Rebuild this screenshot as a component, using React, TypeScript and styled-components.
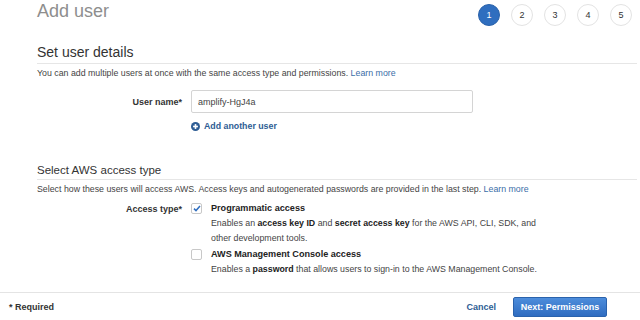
import * as React from "react";
import styled, { createGlobalStyle } from "styled-components";

const GlobalStyle = createGlobalStyle`
  html, body {
    margin: 0;
    padding: 0;
    background: #ffffff;
  }
  body {
    font-family: "Liberation Sans", Arial, Helvetica, sans-serif;
    color: #333333;
  }
`;

const Page = styled.div`
  display: flex;
  flex-direction: column;
  width: 640px;
  height: 320px;
  overflow: hidden;
`;

const Content = styled.div`
  flex: 1;
  padding: 0 3px 0 37px;
`;

const Header = styled.div`
  display: flex;
  justify-content: space-between;
  align-items: flex-start;
  height: 26px;
  padding-right: 5px;
`;

const Title = styled.h1`
  margin: 0;
  padding-top: 1px;
  font-size: 18px;
  line-height: 20px;
  font-weight: normal;
  color: #8e8e8e;
`;

const Steps = styled.div`
  display: flex;
  gap: 11px;
  margin-top: 4px;
`;

const Step = styled.div<{ active?: boolean }>`
  box-sizing: border-box;
  width: 22px;
  height: 22px;
  border-radius: 50%;
  display: flex;
  align-items: center;
  justify-content: center;
  font-size: 9px;
  background: ${(p) => (p.active ? "#2f6ebf" : "#ffffff")};
  border: 1px solid ${(p) => (p.active ? "#2a62aa" : "#e3e3e3")};
  color: ${(p) => (p.active ? "#ffffff" : "#333333")};
`;

const SectionTitle = styled.h2<{ top: number; size: number; gap: number }>`
  margin: ${(p) => p.top}px 0 0;
  padding-bottom: ${(p) => p.gap}px;
  font-size: ${(p) => p.size}px;
  line-height: 16px;
  font-weight: normal;
  color: #333333;
  border-bottom: 1px solid #e6e6e6;
`;

const Description = styled.p`
  margin: 3px 0 0;
  font-size: 8.8px;
  line-height: 12px;
  color: #444444;
`;

const Link = styled.a`
  color: #3a6ea8;
  text-decoration: none;
`;

const FormRow = styled.div<{ top: number }>`
  display: flex;
  align-items: flex-start;
  gap: 9px;
  margin-top: ${(p) => p.top}px;
`;

const Label = styled.div<{ offset?: number }>`
  width: 145px;
  flex-shrink: 0;
  text-align: right;
  font-size: 9px;
  font-weight: bold;
  color: #333333;
  line-height: 12px;
  padding-top: ${(p) => p.offset || 0}px;
`;

const TextInput = styled.div`
  box-sizing: border-box;
  width: 282px;
  height: 23px;
  border: 1px solid #d4d4d4;
  border-radius: 2px;
  padding: 0 6px;
  display: flex;
  align-items: center;
  font-size: 9px;
  color: #444444;
`;

const AddUser = styled.div`
  display: flex;
  align-items: center;
  gap: 4px;
  margin: 7px 0 0 154px;
  font-size: 8.8px;
  line-height: 12px;
  font-weight: bold;
  color: #2e5d94;
`;

const Options = styled.div`
  display: flex;
  flex-direction: column;
  gap: 1px;
`;

const Option = styled.div`
  display: flex;
  gap: 9px;
`;

const Checkbox = styled.div`
  box-sizing: border-box;
  width: 11px;
  height: 11px;
  margin-top: 2px;
  flex-shrink: 0;
  border: 1px solid #c8c8c8;
  border-radius: 2px;
  background: #ffffff;
  display: flex;
  align-items: center;
  justify-content: center;
`;

const OptionText = styled.div`
  width: 340px;
  font-size: 8.8px;
  line-height: 15px;
  color: #444444;

  b {
    color: #222222;
  }
`;

const OptionTitle = styled.div`
  font-size: 9.1px;
  font-weight: bold;
  color: #222222;
`;

const Footer = styled.div`
  box-sizing: border-box;
  height: 28px;
  border-top: 1px solid #e4e4e4;
  display: flex;
  align-items: center;
  padding: 0 33px 0 9px;
  font-size: 9px;
  font-weight: bold;
`;

const Required = styled.span`
  flex: 1;
  color: #333333;
`;

const CancelButton = styled.span`
  color: #2e5d94;
  margin-right: 17px;
`;

const PrimaryButton = styled.button`
  box-sizing: border-box;
  height: 20px;
  width: 94px;
  padding: 0;
  border: 1px solid #2a62ac;
  border-radius: 2px;
  background: linear-gradient(#4d8ddb, #2f6cc0);
  color: #ffffff;
  font-family: inherit;
  font-size: 9px;
  font-weight: bold;
`;

const PlusIcon = () => (
  <svg width="9" height="9" viewBox="0 0 10 10">
    <circle cx="5" cy="5" r="5" fill="#2e5d94" />
    <rect x="2.3" y="4.1" width="5.4" height="1.8" fill="#ffffff" />
    <rect x="4.1" y="2.3" width="1.8" height="5.4" fill="#ffffff" />
  </svg>
);

const CheckMark = () => (
  <svg width="8" height="7" viewBox="0 0 8 7">
    <polyline
      points="1,3.6 3,5.6 7,1"
      fill="none"
      stroke="#2f6ebf"
      strokeWidth="1.5"
    />
  </svg>
);

export default function App() {
  return (
    <Page>
      <GlobalStyle />
      <Content>
        <Header>
          <Title>Add user</Title>
          <Steps>
            {[1, 2, 3, 4, 5].map((n) => (
              <Step key={n} active={n === 1}>
                {n}
              </Step>
            ))}
          </Steps>
        </Header>

        <SectionTitle top={18} size={14} gap={3}>
          Set user details
        </SectionTitle>
        <Description>
          You can add multiple users at once with the same access type and
          permissions. <Link>Learn more</Link>
        </Description>

        <FormRow top={11}>
          <Label offset={6}>User name*</Label>
          <TextInput>amplify-HgJ4a</TextInput>
        </FormRow>
        <AddUser>
          <PlusIcon />
          Add another user
        </AddUser>

        <SectionTitle top={30} size={11.5} gap={1}>
          Select AWS access type
        </SectionTitle>
        <Description>
          Select how these users will access AWS. Access keys and autogenerated
          passwords are provided in the last step. <Link>Learn more</Link>
        </Description>

        <FormRow top={6}>
          <Label offset={2}>Access type*</Label>
          <Options>
            <Option>
              <Checkbox>
                <CheckMark />
              </Checkbox>
              <OptionText>
                <OptionTitle>Programmatic access</OptionTitle>
                Enables an <b>access key ID</b> and <b>secret access key</b>{" "}
                for the AWS API, CLI, SDK, and other development tools.
              </OptionText>
            </Option>
            <Option>
              <Checkbox />
              <OptionText>
                <OptionTitle>AWS Management Console access</OptionTitle>
                Enables a <b>password</b> that allows users to sign-in to the
                AWS Management Console.
              </OptionText>
            </Option>
          </Options>
        </FormRow>
      </Content>
      <Footer>
        <Required>* Required</Required>
        <CancelButton>Cancel</CancelButton>
        <PrimaryButton>Next: Permissions</PrimaryButton>
      </Footer>
    </Page>
  );
}
